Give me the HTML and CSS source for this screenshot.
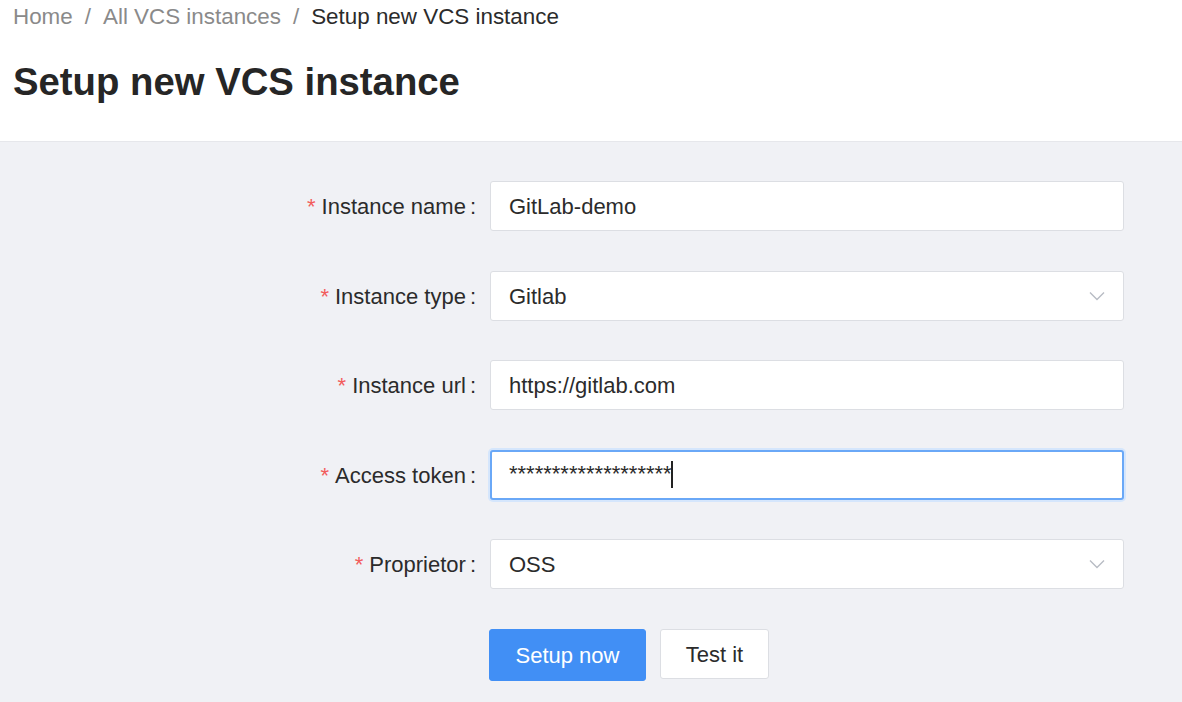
FILE: index.html
```html
<!DOCTYPE html>
<html>
<head>
<meta charset="utf-8">
<link rel="stylesheet" href="styles.css">
</head>
<body>
<div class="header">
  <div class="breadcrumb">
    <span class="crumb">Home</span><span class="sep">/</span><span class="crumb">All VCS instances</span><span class="sep">/</span><span class="crumb current">Setup new VCS instance</span>
  </div>
  <h1 class="title">Setup new VCS instance</h1>
</div>
<div class="content">
  <form class="form">
    <div class="row">
      <label class="label"><span class="req">*</span>Instance name<span class="colon">:</span></label>
      <div class="field"><div class="input">GitLab-demo</div></div>
    </div>
    <div class="row">
      <label class="label"><span class="req">*</span>Instance type<span class="colon">:</span></label>
      <div class="field"><div class="input select">Gitlab<svg class="chev" width="16" height="10" viewBox="0 0 16 10"><path d="M1 1.5 L8 8.5 L15 1.5" fill="none" stroke="#b8bcc4" stroke-width="1.4"/></svg></div></div>
    </div>
    <div class="row">
      <label class="label"><span class="req">*</span>Instance url<span class="colon">:</span></label>
      <div class="field"><div class="input">https://gitlab.com</div></div>
    </div>
    <div class="row">
      <label class="label"><span class="req">*</span>Access token<span class="colon">:</span></label>
      <div class="field"><div class="input focused"><span class="pw">*******************</span><span class="caret"></span></div></div>
    </div>
    <div class="row">
      <label class="label"><span class="req">*</span>Proprietor<span class="colon">:</span></label>
      <div class="field"><div class="input select">OSS<svg class="chev" width="16" height="10" viewBox="0 0 16 10"><path d="M1 1.5 L8 8.5 L15 1.5" fill="none" stroke="#b8bcc4" stroke-width="1.4"/></svg></div></div>
    </div>
    <div class="row buttons">
      <div class="label"></div>
      <div class="field btns">
        <button type="button" class="btn primary">Setup now</button>
        <button type="button" class="btn">Test it</button>
      </div>
    </div>
  </form>
</div>
</body>
</html>
```
FILE: styles.css
```css
html, body {
  margin: 0;
  padding: 0;
  height: 100%;
}
body {
  font-family: "Liberation Sans", Arial, sans-serif;
  color: #2b2b2b;
  background: #f0f1f5;
  display: flex;
  flex-direction: column;
}
.header {
  background: #fff;
  padding: 4px 13px 0;
  height: 141px;
  box-sizing: border-box;
}
.breadcrumb {
  font-size: 22.4px;
  line-height: 26px;
  color: #8a8a8a;
}
.crumb.current {
  color: #2b2b2b;
}
.sep {
  margin: 0 12px;
  color: #8a8a8a;
}
.title {
  margin: 31px 0 0;
  font-size: 38.3px;
  line-height: 42px;
  font-weight: bold;
  color: #262626;
}
.content {
  flex: 1;
  border-top: 1px solid #e6e7eb;
  background: #f0f1f5;
  padding-top: 39px;
}
.form {
  display: flex;
  flex-direction: column;
  gap: 39.5px;
}
.row {
  display: flex;
  align-items: center;
}
.label {
  width: 476px;
  text-align: right;
  font-size: 22px;
  color: #2b2b2b;
  flex: none;
  padding-top: 2px;
}
.req {
  color: #f25c5c;
  margin-right: 6px;
}
.colon {
  margin-left: 4px;
}
.field {
  margin-left: 14px;
  width: 634px;
}
.input {
  height: 50px;
  box-sizing: border-box;
  background: #fff;
  border: 1px solid #dcdee3;
  border-radius: 3px;
  padding: 2px 18px 0;
  display: flex;
  align-items: center;
  font-size: 22px;
  color: #2b2b2b;
  position: relative;
}
.input.select {
  justify-content: space-between;
}
.chev {
  margin-right: 0;
  margin-top: -2px;
}
.input.focused {
  border: 2px solid #6aa8f7;
  box-shadow: 0 0 0 2px #d5e6fc;
  padding: 0 18px 0 17px;
}
.pw {
  font-size: 22px;
  line-height: 1;
  position: relative;
  top: -1px;
}
.caret {
  display: inline-block;
  width: 2px;
  height: 27px;
  background: #222;
  margin-left: -1px;
}
.btns {
  display: flex;
  gap: 14px;
}
.btn {
  height: 52px;
  border-radius: 3px;
  font-family: "Liberation Sans", Arial, sans-serif;
  font-size: 22px;
  padding: 2px 0 0;
  background: #fff;
  border: 1px solid #dcdee3;
  color: #2b2b2b;
}
.btn.primary {
  background: #418ff5;
  border-color: #418ff5;
  color: #fff;
  width: 157px;
  margin-left: -1px;
}
.btn:not(.primary) {
  width: 109px;
  height: 50px;
}
```
